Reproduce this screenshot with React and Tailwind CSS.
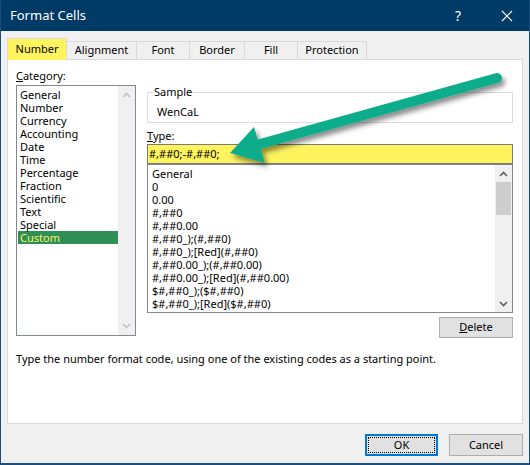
import React from "react";

const categories = ["General","Number","Currency","Accounting","Date","Time","Percentage","Fraction","Scientific","Text","Special","Custom"];
const formats = ["General","0","0.00","#,##0","#,##0.00","#,##0_);(#,##0)","#,##0_);[Red](#,##0)","#,##0.00_);(#,##0.00)","#,##0.00_);[Red](#,##0.00)","$#,##0_);($#,##0)","$#,##0_);[Red]($#,##0)"];
const tabs = [
  { label: "Number", w: "w-[60px]" },
  { label: "Alignment", w: "w-[70px]" },
  { label: "Font", w: "w-[53px]" },
  { label: "Border", w: "w-[55px]" },
  { label: "Fill", w: "w-[53px]" },
  { label: "Protection", w: "w-[69px]" },
];

const Chevron = ({ up, color }) => (
  <svg width="9" height="6" viewBox="0 0 9 6">
    <polyline points={up ? "1,5 4.5,1.5 8,5" : "1,1 4.5,4.5 8,1"} fill="none" stroke={color} strokeWidth="1.6" />
  </svg>
);

export default function App() {
  return (
    <div className="relative w-[530px] h-[465px] bg-[#f0f0f0] border-l border-r border-b-2 border-[#1b4e7f] flex flex-col text-[11px] text-black overflow-hidden" style={{ fontFamily: '"Noto Sans", "Open Sans", sans-serif' }}>
      {/* title bar */}
      <div className="h-[31px] bg-[#003a66] text-white flex items-center pl-[9px] shrink-0">
        <span className="text-[13px] flex-1">Format Cells</span>
        <span className="text-[14px] w-[10px] mr-[36px]">?</span>
        <svg width="12" height="12" viewBox="0 0 12 12" className="mr-[16px]">
          <path d="M1 1 L11 11 M11 1 L1 11" stroke="white" strokeWidth="1.2" />
        </svg>
      </div>

      <div className="px-[6px] flex flex-col">
        {/* tabs */}
        <div className="mt-[7px] h-[21px] flex items-end">
          {tabs.map((t, i) => (
            <div
              key={t.label}
              className={
                i === 0
                  ? `${t.w} h-[22px] -mb-px relative z-10 bg-[#fff35e] border border-b-0 border-[#d9d9d9] flex items-center justify-center`
                  : `${t.w} h-[18px] bg-[#f0f0f0] border-t border-r border-[#d9d9d9] flex items-center justify-center`
              }
            >
              {t.label}
            </div>
          ))}
        </div>

        {/* panel */}
        <div className="h-[365px] bg-white border border-[#d9d9d9] pl-[8px] flex flex-col">
          <div className="flex gap-[11px]">
            <div className="w-[120px] flex flex-col">
              <div className="mt-[8px] h-[16px] leading-[16px]"><span className="underline">C</span>ategory:</div>
              <div className="mt-[1px] h-[251px] border border-[#828790] flex">
                <div className="flex-1 pt-[2px] pl-[1px]">
                  {categories.map((c) => (
                    <div key={c} className={c === "Custom" ? "h-[13px] leading-[13px] pl-[2px] bg-[#2f8f57] text-[#f6f36a]" : "h-[13px] leading-[13px] pl-[2px]"}>{c}</div>
                  ))}
                </div>
                <div className="w-[17px] bg-[#f0f0f0] flex flex-col items-center justify-between py-[6px]">
                  <Chevron up color="#c2c2c2" />
                  <Chevron color="#c2c2c2" />
                </div>
              </div>
            </div>

            <div className="w-[366px] flex flex-col pt-[24px]">
              <fieldset className="h-[39px] border border-[#dcdcdc] px-[5px]">
                <legend className="px-[1px] h-[16px] leading-[16px]">Sample</legend>
                <div className="pl-[4px] h-[16px] leading-[16px] mt-[4px]">WenCaL</div>
              </fieldset>
              <div className="mt-[5px] h-[16px] leading-[16px]"><span className="underline">T</span>ype:</div>
              <div className="h-[20px] bg-[#fff35e] border border-[#7a7a7a] pl-[1px] leading-[18px]">#,##0;-#,##0;</div>
              <div className="h-[149px] border border-[#828790] flex">
                <div className="flex-1 pt-[2px] pl-[4px]">
                  {formats.map((f) => (
                    <div key={f} className="h-[13px] leading-[13px] whitespace-nowrap">{f}</div>
                  ))}
                </div>
                <div className="w-[17px] bg-[#f0f0f0] flex flex-col items-center">
                  <div className="h-[17px] flex items-center"><Chevron up color="#606060" /></div>
                  <div className="w-[15px] h-[33px] bg-[#cdcdcd]" />
                  <div className="flex-1" />
                  <div className="h-[17px] flex items-center"><Chevron color="#606060" /></div>
                </div>
              </div>
              <div className="mt-[4px] flex justify-end">
                <div className="w-[74px] h-[21px] bg-[#e1e1e1] border border-[#adadad] flex items-center justify-center">
                  <span><span className="underline">D</span>elete</span>
                </div>
              </div>
            </div>
          </div>
          <div className="mt-[13px] h-[16px] leading-[16px]">Type the number format code, using one of the existing codes as a starting point.</div>
        </div>

        {/* buttons */}
        <div className="mt-[10px] flex justify-end gap-[11px]">
          <div className="w-[73px] h-[22px] bg-[#e1e1e1] border-2 border-[#0078d7] p-[1px]">
            <div className="w-full h-full border border-dotted border-black flex items-center justify-center">OK</div>
          </div>
          <div className="w-[74px] h-[22px] bg-[#e1e1e1] border border-[#adadad] flex items-center justify-center">Cancel</div>
        </div>
      </div>

      {/* annotation arrow */}
      <svg className="absolute left-0 top-0 pointer-events-none" width="530" height="465" viewBox="0 0 530 465">
        <defs>
          <filter id="sh" x="-10%" y="-30%" width="130%" height="180%">
            <feDropShadow dx="3" dy="4" stdDeviation="2.5" floodColor="#000" floodOpacity="0.45" />
          </filter>
        </defs>
        <g filter="url(#sh)">
          <line x1="496" y1="78" x2="252" y2="146" stroke="#10ad8b" strokeWidth="10" strokeLinecap="round" />
          <polygon points="229,153 253,127 264,163" fill="#10ad8b" />
        </g>
      </svg>
    </div>
  );
}
